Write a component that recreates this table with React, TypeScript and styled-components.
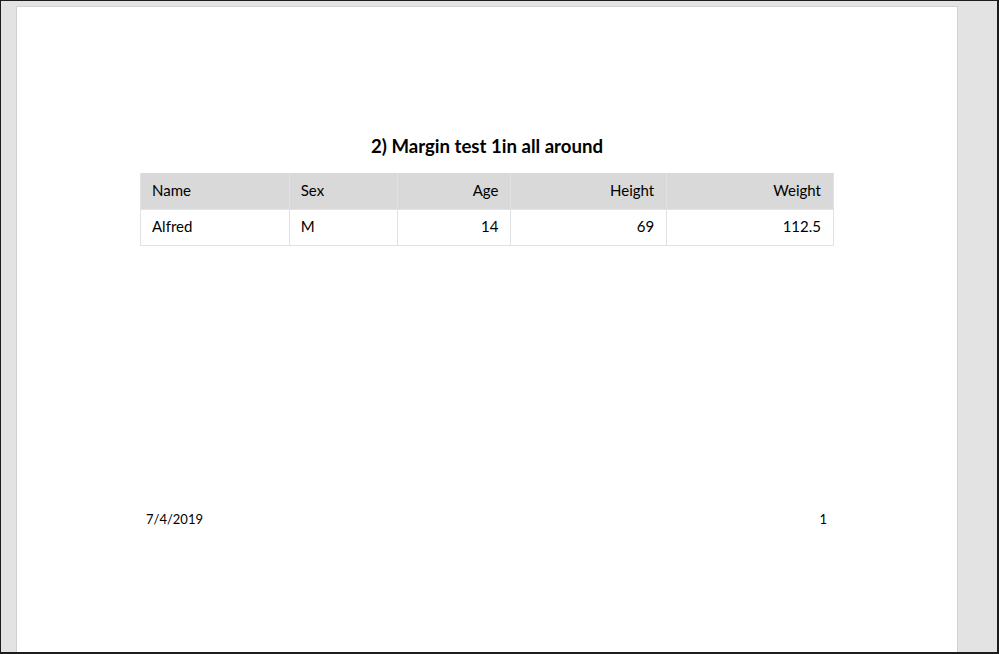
import React from "react";
import styled, { createGlobalStyle } from "styled-components";

const Global = createGlobalStyle`
  html, body { margin: 0; padding: 0; background: #e3e3e3; }
  * { box-sizing: border-box; }
`;

const Frame = styled.div`
  width: 999px;
  height: 654px;
  border: 1px solid #1c1c1c;
  border-right-width: 2px;
  border-bottom-width: 2px;
  background: #e3e3e3;
  padding: 5px 39px 0 15px;
  overflow: hidden;
  display: flex;
`;

const Page = styled.div`
  flex: 1;
  background: #ffffff;
  border: 1px solid #d2d2d2;
  border-bottom: none;
  display: flex;
  flex-direction: column;
  align-items: center;
  font-family: "Lato", "Noto Sans", sans-serif;
  color: #000;
`;

const Title = styled.h1`
  margin: 126px 0 0;
  font-size: 18.6px;
  font-weight: 700;
  line-height: 26px;
  height: 26px;
`;

const Table = styled.table`
  margin-top: 14px;
  border-collapse: collapse;
  width: 694px;
  font-size: 15px;
`;

const Th = styled.th<{ $w: number; $right?: boolean }>`
  width: ${(p) => p.$w}px;
  height: 36px;
  padding: 0 12px 2px 11px;
  background: #d9d9d9;
  font-weight: 400;
  text-align: ${(p) => (p.$right ? "right" : "left")};
  border: 1px solid #e2e2e2;
  border-top: none;
`;

const Td = styled.td<{ $right?: boolean }>`
  height: 36px;
  padding: 0 12px 2px 11px;
  text-align: ${(p) => (p.$right ? "right" : "left")};
  border: 1px solid #e2e2e2;
`;

const Footer = styled.div`
  margin-top: 264px;
  width: 694px;
  display: flex;
  justify-content: space-between;
  padding: 0 7px 0 6px;
  font-size: 13px;
  line-height: 18px;
`;

const cols = [
  { h: "Name", w: 149, r: false, v: "Alfred" },
  { h: "Sex", w: 108, r: false, v: "M" },
  { h: "Age", w: 114, r: true, v: "14" },
  { h: "Height", w: 156, r: true, v: "69" },
  { h: "Weight", w: 167, r: true, v: "112.5" },
];

export default function App() {
  return (
    <>
      <Global />
      <Frame>
        <Page>
          <Title>2) Margin test 1in all around</Title>
          <Table>
            <thead>
              <tr>
                {cols.map((c) => (
                  <Th key={c.h} $w={c.w} $right={c.r}>
                    {c.h}
                  </Th>
                ))}
              </tr>
            </thead>
            <tbody>
              <tr>
                {cols.map((c) => (
                  <Td key={c.h} $right={c.r}>
                    {c.v}
                  </Td>
                ))}
              </tr>
            </tbody>
          </Table>
          <Footer>
            <span>7/4/2019</span>
            <span>1</span>
          </Footer>
        </Page>
      </Frame>
    </>
  );
}
